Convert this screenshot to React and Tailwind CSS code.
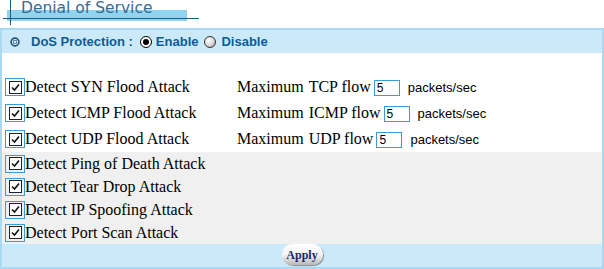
import React from 'react';

const Check = () => (
  <span className="flex items-center justify-center w-[20px] h-[18px] border border-[#3d9ad6] shrink-0">
    <span className="flex items-center justify-center w-[13px] h-[13px] border border-[#222] bg-white">
      <svg width="9" height="9" viewBox="0 0 9 9">
        <path d="M1 4.5 L3.5 7 L8 1.5" fill="none" stroke="#111" strokeWidth="1.6" />
      </svg>
    </span>
  </span>
);

const FlowInput = () => (
  <span className="inline-flex items-center h-[16px] w-[26px] border border-[#3d9ad6] bg-white px-[2px] text-[12px] text-black font-['Liberation_Sans',Arial,sans-serif]">
    5
  </span>
);

const App = () => {
  const flowRows = [
    { label: 'Detect SYN Flood Attack', proto: 'TCP' },
    { label: 'Detect ICMP Flood Attack', proto: 'ICMP' },
    { label: 'Detect UDP Flood Attack', proto: 'UDP' }
  ];
  const otherRows = [
    'Detect Ping of Death Attack',
    'Detect Tear Drop Attack',
    'Detect IP Spoofing Attack',
    'Detect Port Scan Attack'
  ];

  return (
    <div className="w-[604px] h-[269px] bg-white overflow-hidden font-['Liberation_Serif','Times_New_Roman',serif]">
      {/* Title */}
      <div className="relative h-[28px]">
        <div className="absolute left-[7px] top-[10px] w-[180px] h-[11px] bg-[#90d4ef]" />
        <div className="absolute left-[3px] top-[18px] w-[196px] h-px bg-[#1b5d80]" />
        <div className="absolute left-[10px] top-0 w-px h-[25px] bg-[#1b5d80]" />
        <div className="absolute left-[21px] top-0 text-[15.5px] leading-[16px] text-[#3b6a93] font-['DejaVu_Sans',sans-serif]">
          Denial of Service
        </div>
      </div>

      {/* Panel */}
      <div className="border-2 border-[#aad9f1] h-[241px] flex flex-col">
        <div className="h-[23px] bg-[#cce9f9] flex items-center pl-[8px] font-['Liberation_Sans',Arial,sans-serif] font-bold text-[13px] text-[#0b5c98]">
          <svg width="10" height="10" viewBox="0 0 10 10" className="mr-[11px]">
            <circle cx="5" cy="5" r="3.9" fill="none" stroke="#1f5377" strokeWidth="1.6" />
            <rect x="3.5" y="3.5" width="3" height="3" fill="none" stroke="#6d8ca4" strokeWidth="1" />
          </svg>
          <span>DoS Protection :</span>
          <span className="ml-[7px] w-[12px] h-[12px] rounded-full border border-black bg-white flex items-center justify-center">
            <span className="w-[6px] h-[6px] rounded-full bg-black" />
          </span>
          <span className="ml-[4px]">Enable</span>
          <span className="ml-[6px] w-[12px] h-[12px] rounded-full border border-[#333] bg-[radial-gradient(circle_at_35%_35%,#ffffff,#d8d8d8_55%,#8a8a8a)]" />
          <span className="ml-[5px]">Disable</span>
        </div>

        <div className="h-[99px] bg-white pt-[21px] text-[16px] text-black">
          {flowRows.map((r) => (
            <div key={r.label} className="h-[26px] flex items-center pl-[3px]">
              <Check />
              <span className="w-[212px] leading-none">{r.label}</span>
              <span className="leading-none">Maximum</span>
              <span className="ml-[5px] leading-none">{r.proto} flow</span>
              <span className="ml-[3px]"><FlowInput /></span>
              <span className="ml-[8px] text-[13px] font-['Liberation_Sans',Arial,sans-serif] leading-none">packets/sec</span>
            </div>
          ))}
        </div>

        <div className="h-[92px] bg-[#f0f0f0] text-[16px] text-black">
          {otherRows.map((r) => (
            <div key={r} className="h-[23px] flex items-center pl-[3px]">
              <Check />
              <span className="leading-none">{r}</span>
            </div>
          ))}
        </div>

        <div className="flex-1 bg-[#cce9f9] flex justify-center items-start">
          <button className="mt-0 h-[21px] w-[41px] rounded-full bg-[linear-gradient(180deg,#ffffff,#f4f4f4_50%,#b8b8b8)] shadow-[1px_1px_1px_#8a8a8a] text-[12px] font-bold text-[#1a2a6e] font-['Liberation_Serif',serif]">
            Apply
          </button>
        </div>
      </div>
    </div>
  );
};

export default App;
